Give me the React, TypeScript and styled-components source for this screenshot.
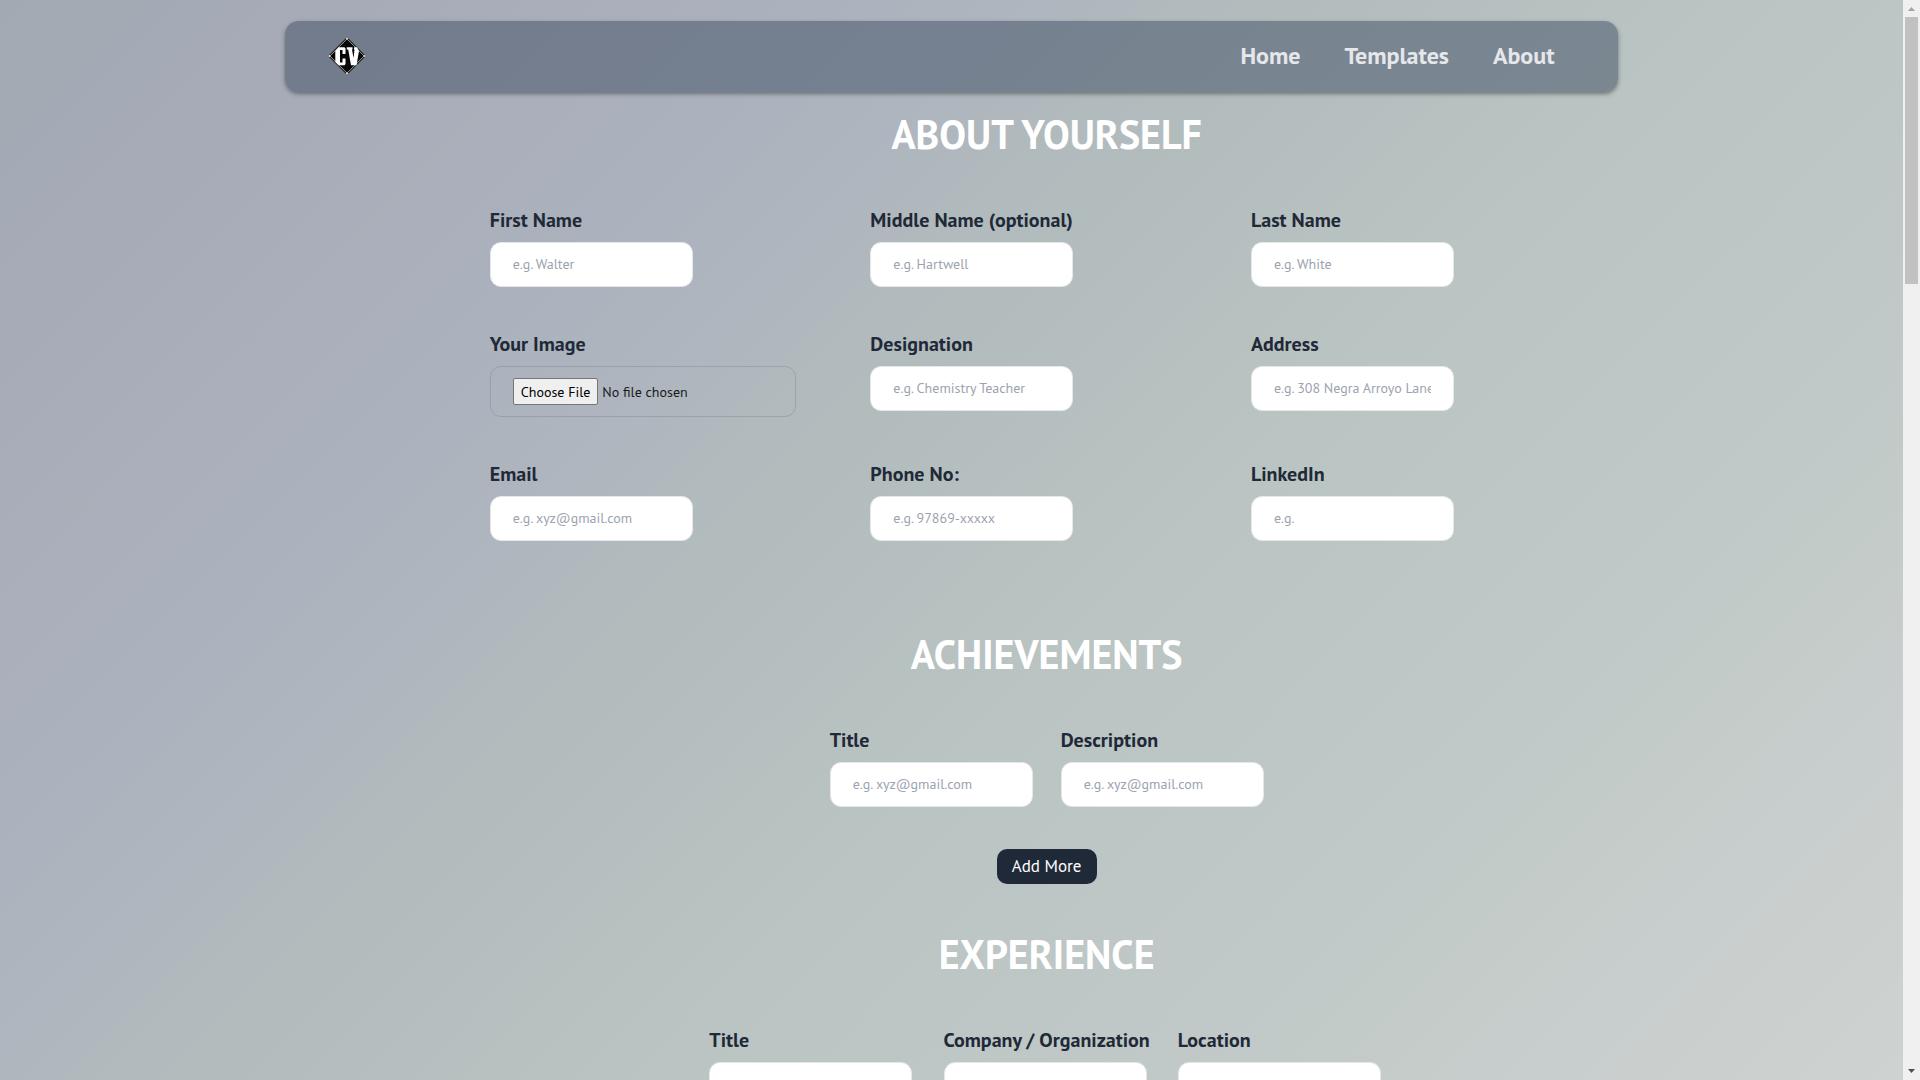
import React, { useId } from 'react';
import styled, { createGlobalStyle } from 'styled-components';

const GlobalStyle = createGlobalStyle`
  *, *::before, *::after { box-sizing: border-box; }
  body {
    margin: 0;
    font-family: "PT Sans", "Noto Sans", sans-serif;
    color: #1f2937;
  }
  h2 { margin: 0; }
`;

const Shell = styled.div`
  display: grid;
  grid-template-columns: minmax(0, 1fr) 17px;
  height: 100vh;
`;

const Page = styled.div`
  overflow-y: auto;
  scrollbar-width: none;
  padding-top: 21px;
  background: linear-gradient(135deg, #a1aab3 0%, #a7abb7 12%, #aeb5bf 34%, #b1babc 40%, #bac4c2 58%, #c0c9c7 75%, #cbd0cf 93%, #ced2d1 100%);
`;

const NavBar = styled.header`
  display: flex;
  align-items: center;
  justify-content: space-between;
  width: 70%;
  height: 71px;
  margin: 0 auto;
  padding: 0 63px 2px 43px;
  border-radius: 14px;
  background: rgba(71, 85, 105, 0.55);
  box-shadow: 0 2px 4px rgba(60, 66, 66, 0.6);
`;

const LogoLink = styled.a`
  display: flex;
`;

const NavLinks = styled.nav`
  display: flex;
  gap: 44px;
`;

const NavLink = styled.a`
  font-size: 24px;
  line-height: 32px;
  font-weight: 700;
  color: #e5e7eb;
  text-decoration: none;
`;

const Form = styled.form`
  width: 60%;
  margin-left: 25%;
  padding-top: 22px;
`;

const Section = styled.section`
  display: flex;
  flex-direction: column;
  align-items: center;
  padding-bottom: 50px;
`;

const Heading = styled.h2`
  margin-bottom: 52px;
  font-size: 40px;
  line-height: 40px;
  font-weight: 700;
  color: #fff;
  text-transform: uppercase;
`;

const PersonalGrid = styled.div`
  display: grid;
  grid-template-columns: repeat(3, minmax(0, 1fr));
  row-gap: 43px;
  width: 100%;
  margin-bottom: 43px;
`;

const FieldRow = styled.div`
  display: grid;
  grid-auto-flow: column;
  grid-auto-columns: 1fr;
  margin-bottom: 42px;
`;

const FieldBox = styled.div`
  display: flex;
  flex-direction: column;
  align-items: flex-start;
  gap: 8px;
  padding: 0 14px;
`;

const Label = styled.label`
  font-size: 20px;
  line-height: 28px;
  font-weight: 600;
  white-space: nowrap;
`;

const TextInput = styled.input`
  width: 203px;
  height: 45px;
  padding: 0 22px 2px;
  border: 1px solid #e5e7eb;
  border-radius: 11px;
  background: #fff;
  color: #1f2937;
  font: inherit;
  font-size: 14px;
  &::placeholder { color: #9ca3af; opacity: 1; }
`;

const FileInput = styled.input`
  width: 306px;
  max-width: 100%;
  height: 51px;
  padding: 11px 22px;
  border: 1px solid rgba(107, 114, 128, 0.3);
  border-radius: 11px;
  color: #1a1a1a;
  font: inherit;
  font-size: 14px;
  line-height: 27px;
  &::file-selector-button {
    height: 27px;
    padding: 0 7px 2px;
    border: 1px solid #767676;
    border-radius: 2px;
    background: #efefef;
    color: #000;
    font: inherit;
  }
`;

const AddButton = styled.button`
  width: 100px;
  height: 35px;
  padding: 0 0 2px;
  border: 0;
  border-radius: 10px;
  background: #1f2937;
  color: #fff;
  font: inherit;
  font-size: 17px;
`;

const ScrollTrack = styled.div`
  display: flex;
  flex-direction: column;
  justify-content: space-between;
  align-items: center;
  background: #f0f0f0;
`;

const ScrollTop = styled.div`
  display: flex;
  flex-direction: column;
  align-items: center;
`;

const Arrow = styled.svg`
  display: block;
  width: 17px;
  height: 17px;
`;

const Thumb = styled.div`
  width: 13px;
  height: 267px;
  background: #c1c1c1;
`;

function Logo() {
  return (
    <svg width="38" height="38" viewBox="0 0 38 38" role="img" aria-label="CV">
      <path d="M19 0 38 19 19 38 0 19Z" fill="#26262a" />
      <path d="M19 2 36 19 19 36 2 19Z" fill="#080808" stroke="#aaa7a2" strokeWidth="0.800" />
      <g fill="#dddbd6">
        <circle cx="19" cy="1.500" r="1.100" />
        <circle cx="36.500" cy="19" r="1.100" />
        <circle cx="19" cy="36.500" r="1.100" />
        <circle cx="1.500" cy="19" r="1.100" />
      </g>
      <path d="M10.500 10.200H16.500L17.500 11.500V17H14.500V13H12V25.500H14.500V21.500H17.500V27L16.500 28.300H10.500L7.300 25V14Z" fill="#fff" />
      <path d="M18.800 10.200H24.500V12.500H24L25.500 21 26.500 12.500H26V10.200H29L31 14 28.500 28.300H23L20.200 12.500H18.800Z" fill="#fff" />
    </svg>
  );
}

interface FieldProps {
  label: string;
  placeholder?: string;
  type?: string;
}

function Field({ label, placeholder, type = 'text' }: FieldProps) {
  const id = useId();
  return (
    <FieldBox>
      <Label htmlFor={id}>{label}</Label>
      {type === 'file' ? (
        <FileInput id={id} type="file" />
      ) : (
        <TextInput id={id} type={type} placeholder={placeholder} />
      )}
    </FieldBox>
  );
}

const personalFields: FieldProps[] = [
  { label: 'First Name', placeholder: 'e.g. Walter' },
  { label: 'Middle Name (optional)', placeholder: 'e.g. Hartwell' },
  { label: 'Last Name', placeholder: 'e.g. White' },
  { label: 'Your Image', type: 'file' },
  { label: 'Designation', placeholder: 'e.g. Chemistry Teacher' },
  { label: 'Address', placeholder: 'e.g. 308 Negra Arroyo Lane' },
  { label: 'Email', placeholder: 'e.g. xyz@gmail.com', type: 'email' },
  { label: 'Phone No:', placeholder: 'e.g. 97869-xxxxx' },
  { label: 'LinkedIn', placeholder: 'e.g.' },
];

export default function App() {
  return (
    <Shell>
      <GlobalStyle />
      <Page>
        <NavBar>
          <LogoLink href="#home"><Logo /></LogoLink>
          <NavLinks>
            <NavLink href="#home">Home</NavLink>
            <NavLink href="#templates">Templates</NavLink>
            <NavLink href="#about">About</NavLink>
          </NavLinks>
        </NavBar>
        <Form>
          <Section>
            <Heading>About Yourself</Heading>
            <PersonalGrid>
              {personalFields.map((field) => (
                <Field key={field.label} {...field} />
              ))}
            </PersonalGrid>
          </Section>
          <Section>
            <Heading>Achievements</Heading>
            <FieldRow>
              <Field label="Title" placeholder="e.g. xyz@gmail.com" />
              <Field label="Description" placeholder="e.g. xyz@gmail.com" />
            </FieldRow>
            <AddButton type="button">Add More</AddButton>
          </Section>
          <Section>
            <Heading>Experience</Heading>
            <FieldRow>
              <Field label="Title" />
              <Field label="Company / Organization" />
              <Field label="Location" />
            </FieldRow>
          </Section>
        </Form>
      </Page>
      <ScrollTrack aria-hidden="true">
        <ScrollTop>
          <Arrow viewBox="0 0 17 17"><path d="M5 11h7L8.500 7Z" fill="#a3a3a3" /></Arrow>
          <Thumb />
        </ScrollTop>
        <Arrow viewBox="0 0 17 17"><path d="M5 6h7L8.500 10Z" fill="#505050" /></Arrow>
      </ScrollTrack>
    </Shell>
  );
}
